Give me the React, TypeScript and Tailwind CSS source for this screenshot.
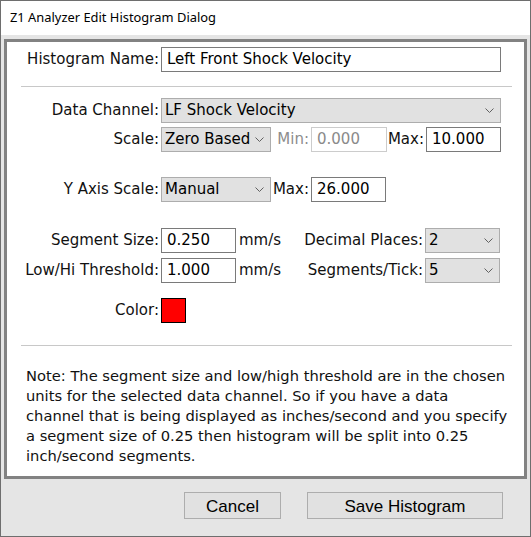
import React from "react";

const font = { fontFamily: '"DejaVu Sans", Verdana, sans-serif' };

function Chevron() {
  return (
    <svg width="9" height="5" viewBox="0 0 9 5" className="shrink-0">
      <polyline points="0.5,0.5 4.5,4.5 8.5,0.5" fill="none" stroke="#606060" strokeWidth="1" />
    </svg>
  );
}

function Select({ value, width }: { value: string; width: string }) {
  return (
    <div
      className={`${width} h-[25px] flex items-center justify-between bg-[#e1e1e1] border border-[#adadad] pl-[3px] pr-[6px] text-black`}
    >
      <span>{value}</span>
      <Chevron />
    </div>
  );
}

function Field({ value, width, disabled }: { value: string; width: string; disabled?: boolean }) {
  return (
    <div
      className={`${width} h-[25px] flex items-center bg-white border pl-[5px] ${
        disabled ? "border-[#cccccc] text-[#8a8a8a]" : "border-[#7a7a7a] text-black"
      }`}
    >
      {value}
    </div>
  );
}

function Label({ children }: { children: React.ReactNode }) {
  return <div className="w-[154px] shrink-0 text-right pr-[2px]">{children}</div>;
}

export default function App() {
  return (
    <div
      className="w-[531px] h-[537px] bg-[#e5e5e5] border border-[#6e6e6e] flex flex-col text-[15px] text-[#111]"
      style={font}
    >
      <div
        className="h-[34px] bg-white flex items-center pl-[9px] text-[12.9px] text-black shrink-0"
        style={{ fontFamily: '"Noto Sans", sans-serif' }}
      >
        Z1 Analyzer Edit Histogram Dialog
      </div>

      <div className="mt-[4px] mx-[3px] h-[440px] bg-white border-[3px] border-[#828282] flex flex-col shrink-0">
        <div className="mt-[5px] h-[25px] flex items-center">
          <Label>Histogram Name:</Label>
          <Field value="Left Front Shock Velocity" width="w-[340px]" />
        </div>

        <div className="mt-[14px] ml-[14px] w-[491px] h-px bg-[#c8c8c8]" />

        <div className="mt-[11px] h-[25px] flex items-center">
          <Label>Data Channel:</Label>
          <Select value="LF Shock Velocity" width="w-[340px]" />
        </div>

        <div className="mt-[4px] h-[25px] flex items-center">
          <Label>Scale:</Label>
          <Select value="Zero Based" width="w-[110px]" />
          <span className="w-[40px] text-right pr-[2px] text-[#8d8d8d]">Min:</span>
          <Field value="0.000" width="w-[76px]" disabled />
          <span className="w-[39px] text-right pr-[2px]">Max:</span>
          <Field value="10.000" width="w-[75px]" />
        </div>

        <div className="mt-[25px] h-[25px] flex items-center">
          <Label>Y Axis Scale:</Label>
          <Select value="Manual" width="w-[110px]" />
          <span className="w-[40px] text-right pr-[2px]">Max:</span>
          <Field value="26.000" width="w-[75px]" />
        </div>

        <div className="mt-[26px] h-[25px] flex items-center">
          <Label>Segment Size:</Label>
          <Field value="0.250" width="w-[75px]" />
          <span className="ml-[3px] w-[60px]">mm/s</span>
          <span className="w-[126px] text-right pr-[2px]">Decimal Places:</span>
          <Select value="2" width="w-[75px]" />
        </div>

        <div className="mt-[5px] h-[25px] flex items-center">
          <Label>Low/Hi Threshold:</Label>
          <Field value="1.000" width="w-[75px]" />
          <span className="ml-[3px] w-[60px]">mm/s</span>
          <span className="w-[126px] text-right pr-[2px]">Segments/Tick:</span>
          <Select value="5" width="w-[75px]" />
        </div>

        <div className="mt-[15px] h-[25px] flex items-center">
          <Label>Color:</Label>
          <div className="w-[25px] h-[25px] bg-[#ff0000] border border-black" />
        </div>

        <div className="mt-[22px] ml-[14px] w-[491px] h-px bg-[#c8c8c8]" />

        <p className="mt-[20px] pl-[19px] text-[14.7px] leading-[20px] whitespace-nowrap">
          Note: The segment size and low/high threshold are in the chosen
          <br />
          units for the selected data channel. So if you have a data
          <br />
          channel that is being displayed as inches/second and you specify
          <br />
          a segment size of 0.25 then histogram will be split into 0.25
          <br />
          inch/second segments.
        </p>
      </div>

      <div
        className="mt-[13px] flex text-[17px] text-black"
        style={{ fontFamily: '"Liberation Sans", Arial, sans-serif' }}
      >
        <button className="ml-[183px] w-[97px] h-[27px] pt-[2px] bg-[#e1e1e1] border border-[#adadad] flex items-center justify-center">
          Cancel
        </button>
        <button className="ml-[26px] w-[196px] h-[27px] pt-[2px] bg-[#e1e1e1] border border-[#adadad] flex items-center justify-center">
          Save Histogram
        </button>
      </div>
    </div>
  );
}
